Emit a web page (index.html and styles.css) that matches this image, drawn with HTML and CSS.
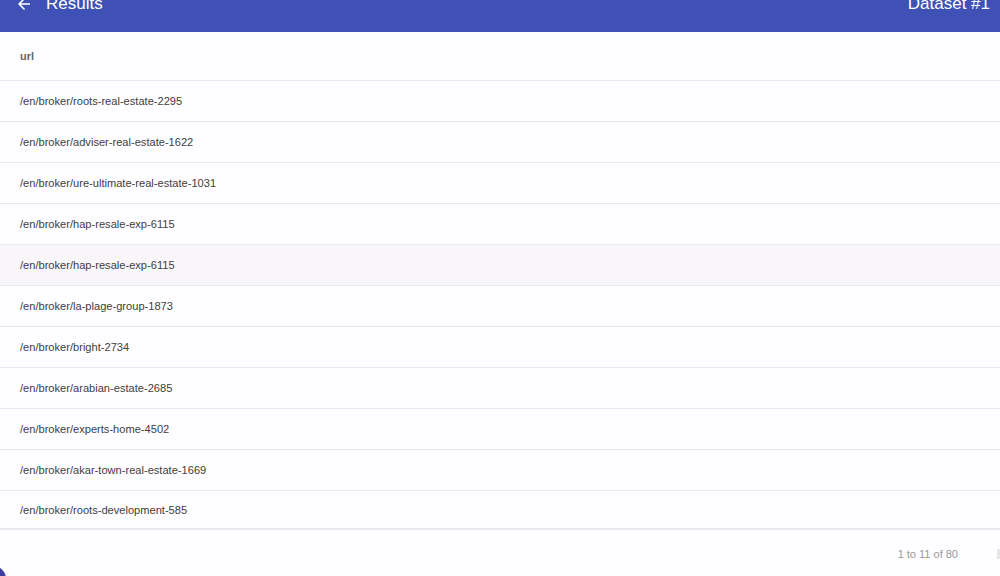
FILE: index.html
```html
<!DOCTYPE html>
<html>
<head>
<meta charset="utf-8">
<link rel="stylesheet" href="styles.css">
</head>
<body>
<header class="toolbar">
  <div class="tb-left">
    <svg class="back" width="18" height="18" viewBox="0 0 24 24"><path d="M20 11H7.83l5.59-5.59L12 4l-8 8 8 8 1.41-1.41L7.83 13H20v-2z" fill="#fff"/></svg>
    <span class="title">Results</span>
  </div>
  <span class="title">Dataset #1</span>
</header>
<main class="grid">
  <div class="head-row"><span class="head-cell">url</span></div>
  <div class="rows">
    <div class="row">/en/broker/roots-real-estate-2295</div>
    <div class="row">/en/broker/adviser-real-estate-1622</div>
    <div class="row">/en/broker/ure-ultimate-real-estate-1031</div>
    <div class="row">/en/broker/hap-resale-exp-6115</div>
    <div class="row hover">/en/broker/hap-resale-exp-6115</div>
    <div class="row">/en/broker/la-plage-group-1873</div>
    <div class="row">/en/broker/bright-2734</div>
    <div class="row">/en/broker/arabian-estate-2685</div>
    <div class="row">/en/broker/experts-home-4502</div>
    <div class="row">/en/broker/akar-town-real-estate-1669</div>
    <div class="row last">/en/broker/roots-development-585</div>
  </div>
  <div class="footer">
    <span class="pager">1 to 11 of 80</span>
    <span class="pager-btn"></span>
  </div>
</main>
<div class="fab"></div>
</body>
</html>
```
FILE: styles.css
```css
html, body {
  margin: 0;
  padding: 0;
  height: 576px;
  overflow: hidden;
  background: #fefdff;
  font-family: "Liberation Sans", Arial, sans-serif;
}
.toolbar {
  height: 56px;
  margin-top: -24px;
  background: #3f51b5;
  color: #fff;
  display: flex;
  align-items: center;
  justify-content: space-between;
  padding: 0 10px 0 15px;
  box-sizing: border-box;
}
.tb-left {
  display: flex;
  align-items: center;
  gap: 13px;
}
.back { display: block; }
.title {
  font-size: 17px;
  line-height: 20px;
}
.grid {
  display: flex;
  flex-direction: column;
  background: #fefdff;
}
.head-row {
  height: 48px;
  border-bottom: 1px solid #ece9ee;
  display: flex;
  align-items: center;
  padding-left: 20px;
}
.head-cell {
  font-size: 11px;
  font-weight: bold;
  color: #666;
}
.row {
  height: 40px;
  border-bottom: 1px solid #ece9ee;
  display: flex;
  align-items: center;
  padding-left: 20px;
  font-size: 11.1px;
  color: #404040;
}
.row.hover { background: #f8f6f9; }
.row.last { height: 37px; border-bottom: 2px solid #ece9ee; }
.footer {
  height: 47px;
  display: flex;
  align-items: center;
  justify-content: flex-end;
}
.pager {
  font-size: 11px;
  color: #999;
  margin-right: 39px;
}
.pager-btn {
  width: 3px;
  height: 10px;
  background: #e6e6e6;
}
.fab {
  position: absolute;
  left: -20px;
  top: 566px;
  width: 26px;
  height: 26px;
  border-radius: 50%;
  background: #3f3da0;
}
```
